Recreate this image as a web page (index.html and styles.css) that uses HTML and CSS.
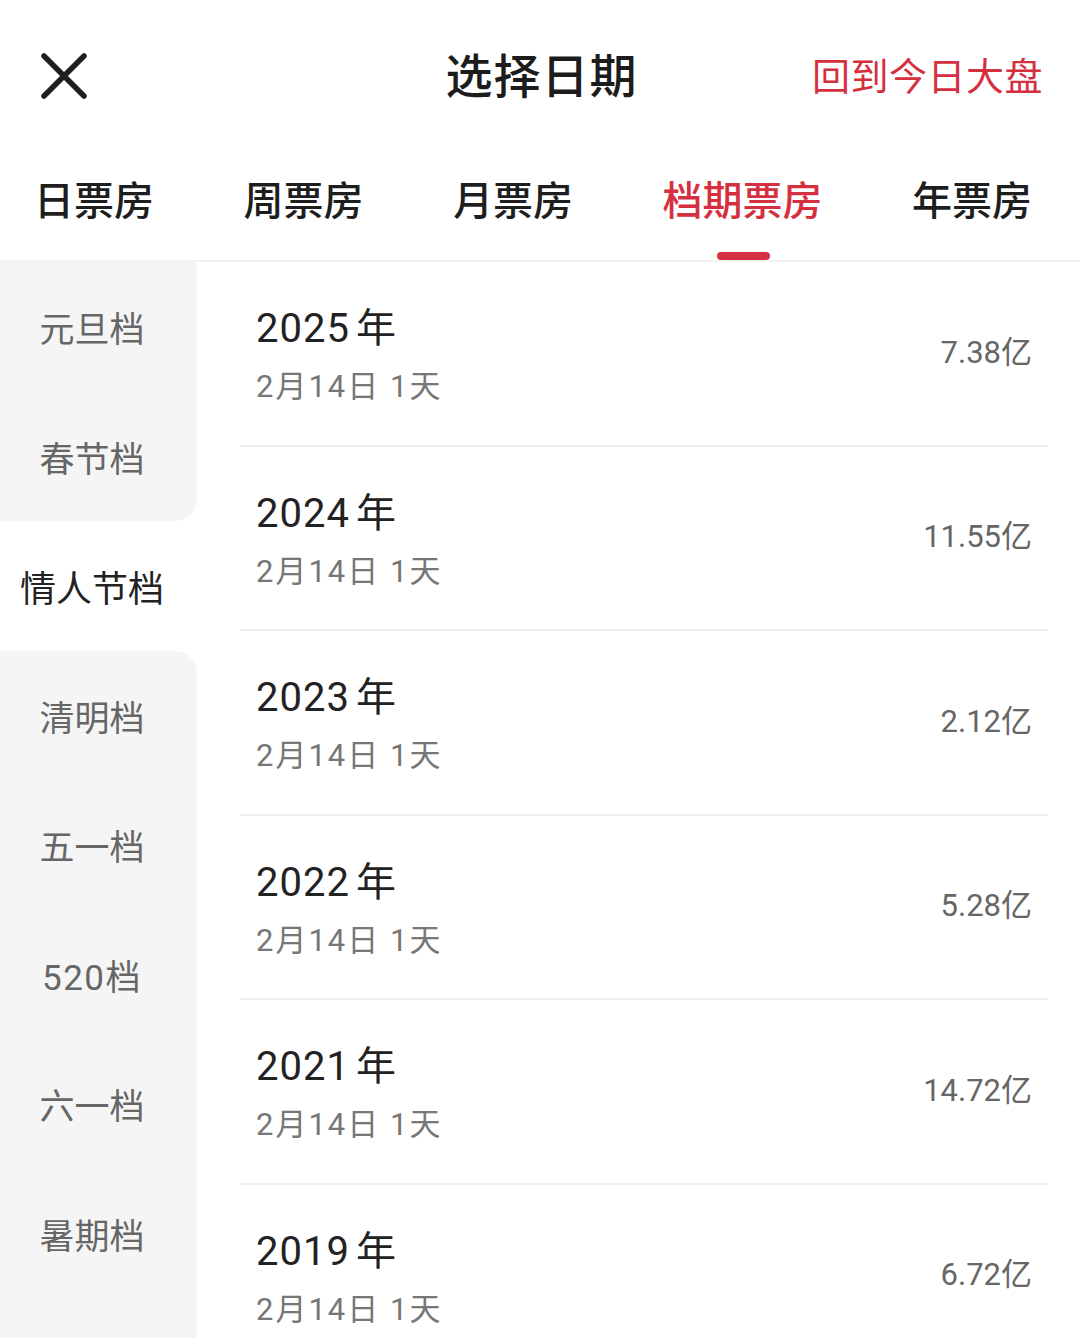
FILE: index.html
```html
<!DOCTYPE html>
<html lang="zh-CN">
<head>
<meta charset="utf-8">
<title>选择日期</title>
<link rel="stylesheet" href="styles.css">
</head>
<body>
<div class="page">
  <header class="topbar">
    <div class="close">
      <svg width="48" height="48" viewBox="0 0 48 48"><path d="M4 4 L44 44 M44 4 L4 44" stroke="#1f1f1f" stroke-width="5.5" stroke-linecap="round" fill="none"/></svg>
    </div>
    <h1 class="title">选择日期</h1>
    <div class="back">回到今日大盘</div>
  </header>
  <nav class="tabs">
    <div class="tab">日票房</div>
    <div class="tab">周票房</div>
    <div class="tab">月票房</div>
    <div class="tab active">档期票房</div>
    <div class="tab">年票房</div>
  </nav>
  <main class="body">
    <aside class="side">
      <div class="side-item">元旦档</div>
      <div class="side-item before">春节档</div>
      <div class="side-item active">情人节档</div>
      <div class="side-item after">清明档</div>
      <div class="side-item">五一档</div>
      <div class="side-item wide">520档</div>
      <div class="side-item">六一档</div>
      <div class="side-item">暑期档</div>
      <div class="side-fill"></div>
    </aside>
    <section class="list">
      <div class="row">
        <div class="info"><div class="year">2025<span class="unit">年</span></div><div class="date">2月14日 1天</div></div>
        <div class="amount">7.38亿</div>
      </div>
      <div class="row">
        <div class="info"><div class="year">2024<span class="unit">年</span></div><div class="date">2月14日 1天</div></div>
        <div class="amount">11.55亿</div>
      </div>
      <div class="row">
        <div class="info"><div class="year">2023<span class="unit">年</span></div><div class="date">2月14日 1天</div></div>
        <div class="amount">2.12亿</div>
      </div>
      <div class="row">
        <div class="info"><div class="year">2022<span class="unit">年</span></div><div class="date">2月14日 1天</div></div>
        <div class="amount">5.28亿</div>
      </div>
      <div class="row">
        <div class="info"><div class="year">2021<span class="unit">年</span></div><div class="date">2月14日 1天</div></div>
        <div class="amount">14.72亿</div>
      </div>
      <div class="row">
        <div class="info"><div class="year">2019<span class="unit">年</span></div><div class="date">2月14日 1天</div></div>
        <div class="amount">6.72亿</div>
      </div>
    </section>
  </main>
</div>
</body>
</html>
```
FILE: styles.css
```css
* { box-sizing: border-box; margin: 0; padding: 0; }
html, body { background: #fff; }
body {
  font-family: Roboto, "Noto Sans CJK SC", sans-serif;
  color: #222;
  width: 1080px;
  height: 1338px;
  overflow: hidden;
}
.page { display: flex; flex-direction: column; height: 1338px; overflow: hidden; }

.topbar {
  flex: none;
  height: 150px;
  display: grid;
  grid-template-columns: 1fr auto 1fr;
  align-items: center;
  padding: 0 37px 0 40px;
}
.close { display: flex; align-items: center; }
.close svg { display: block; margin-top: 2px; }
.title {
  font-size: 47px;
  font-weight: 500;
  color: #1c1c1c;
  letter-spacing: 1px;
  margin-bottom: 5px;
}
.back {
  justify-self: end;
  font-size: 38px;
  color: #d5303f;
  letter-spacing: 0.5px;
  margin-bottom: 4px;
}

.tabs {
  flex: none;
  height: 112px;
  display: flex;
  justify-content: space-between;
  padding: 0 48px 0 34px;
  border-bottom: 2px solid #f2f2f2;
}
.tab {
  position: relative;
  display: flex;
  align-items: center;
  padding-bottom: 14px;
  font-size: 40px;
  font-weight: 500;
  color: #1e1e1e;
}
.tab.active { color: #d5303f; }
.tab.active::after {
  content: "";
  position: absolute;
  left: 50%;
  bottom: 0;
  width: 53px;
  height: 8px;
  margin-left: -26px;
  border-radius: 4px;
  background: #d5303f;
}

.body { flex: 1; display: flex; min-height: 0; }
.side {
  width: 197px;
  flex: none;
  display: flex;
  flex-direction: column;
  background: #fff;
}
.side-item {
  flex: none;
  height: 129.5px;
  display: flex;
  align-items: center;
  justify-content: center;
  padding-right: 13px;
  background: #f5f5f5;
  color: #666;
  font-size: 35px;
}
.side-item.wide { letter-spacing: 1.5px; }
.side-item.before { border-bottom-right-radius: 22px; }
.side-item.after { border-top-right-radius: 22px; }
.side-item.active {
  background: #fff;
  color: #222;
  font-size: 36px;
}
.side-fill { flex: 1; background: #f5f5f5; }

.list {
  flex: 1;
  padding: 0 32px 0 43px;
}
.row {
  height: 184.5px;
  display: flex;
  align-items: center;
  justify-content: space-between;
  padding: 0 16px;
  border-bottom: 2px solid #eeeeee;
}
.info { display: flex; flex-direction: column; padding-top: 6px; }
.year {
  font-size: 40px;
  line-height: 48px;
  color: #222;
  letter-spacing: 1px;
}
.unit { margin-left: 6px; }
.date {
  margin-top: 14px;
  font-size: 31px;
  line-height: 40px;
  color: #777;
  letter-spacing: 2px;
}
.amount {
  font-size: 31px;
  color: #666;
  padding-bottom: 8px;
}
```
